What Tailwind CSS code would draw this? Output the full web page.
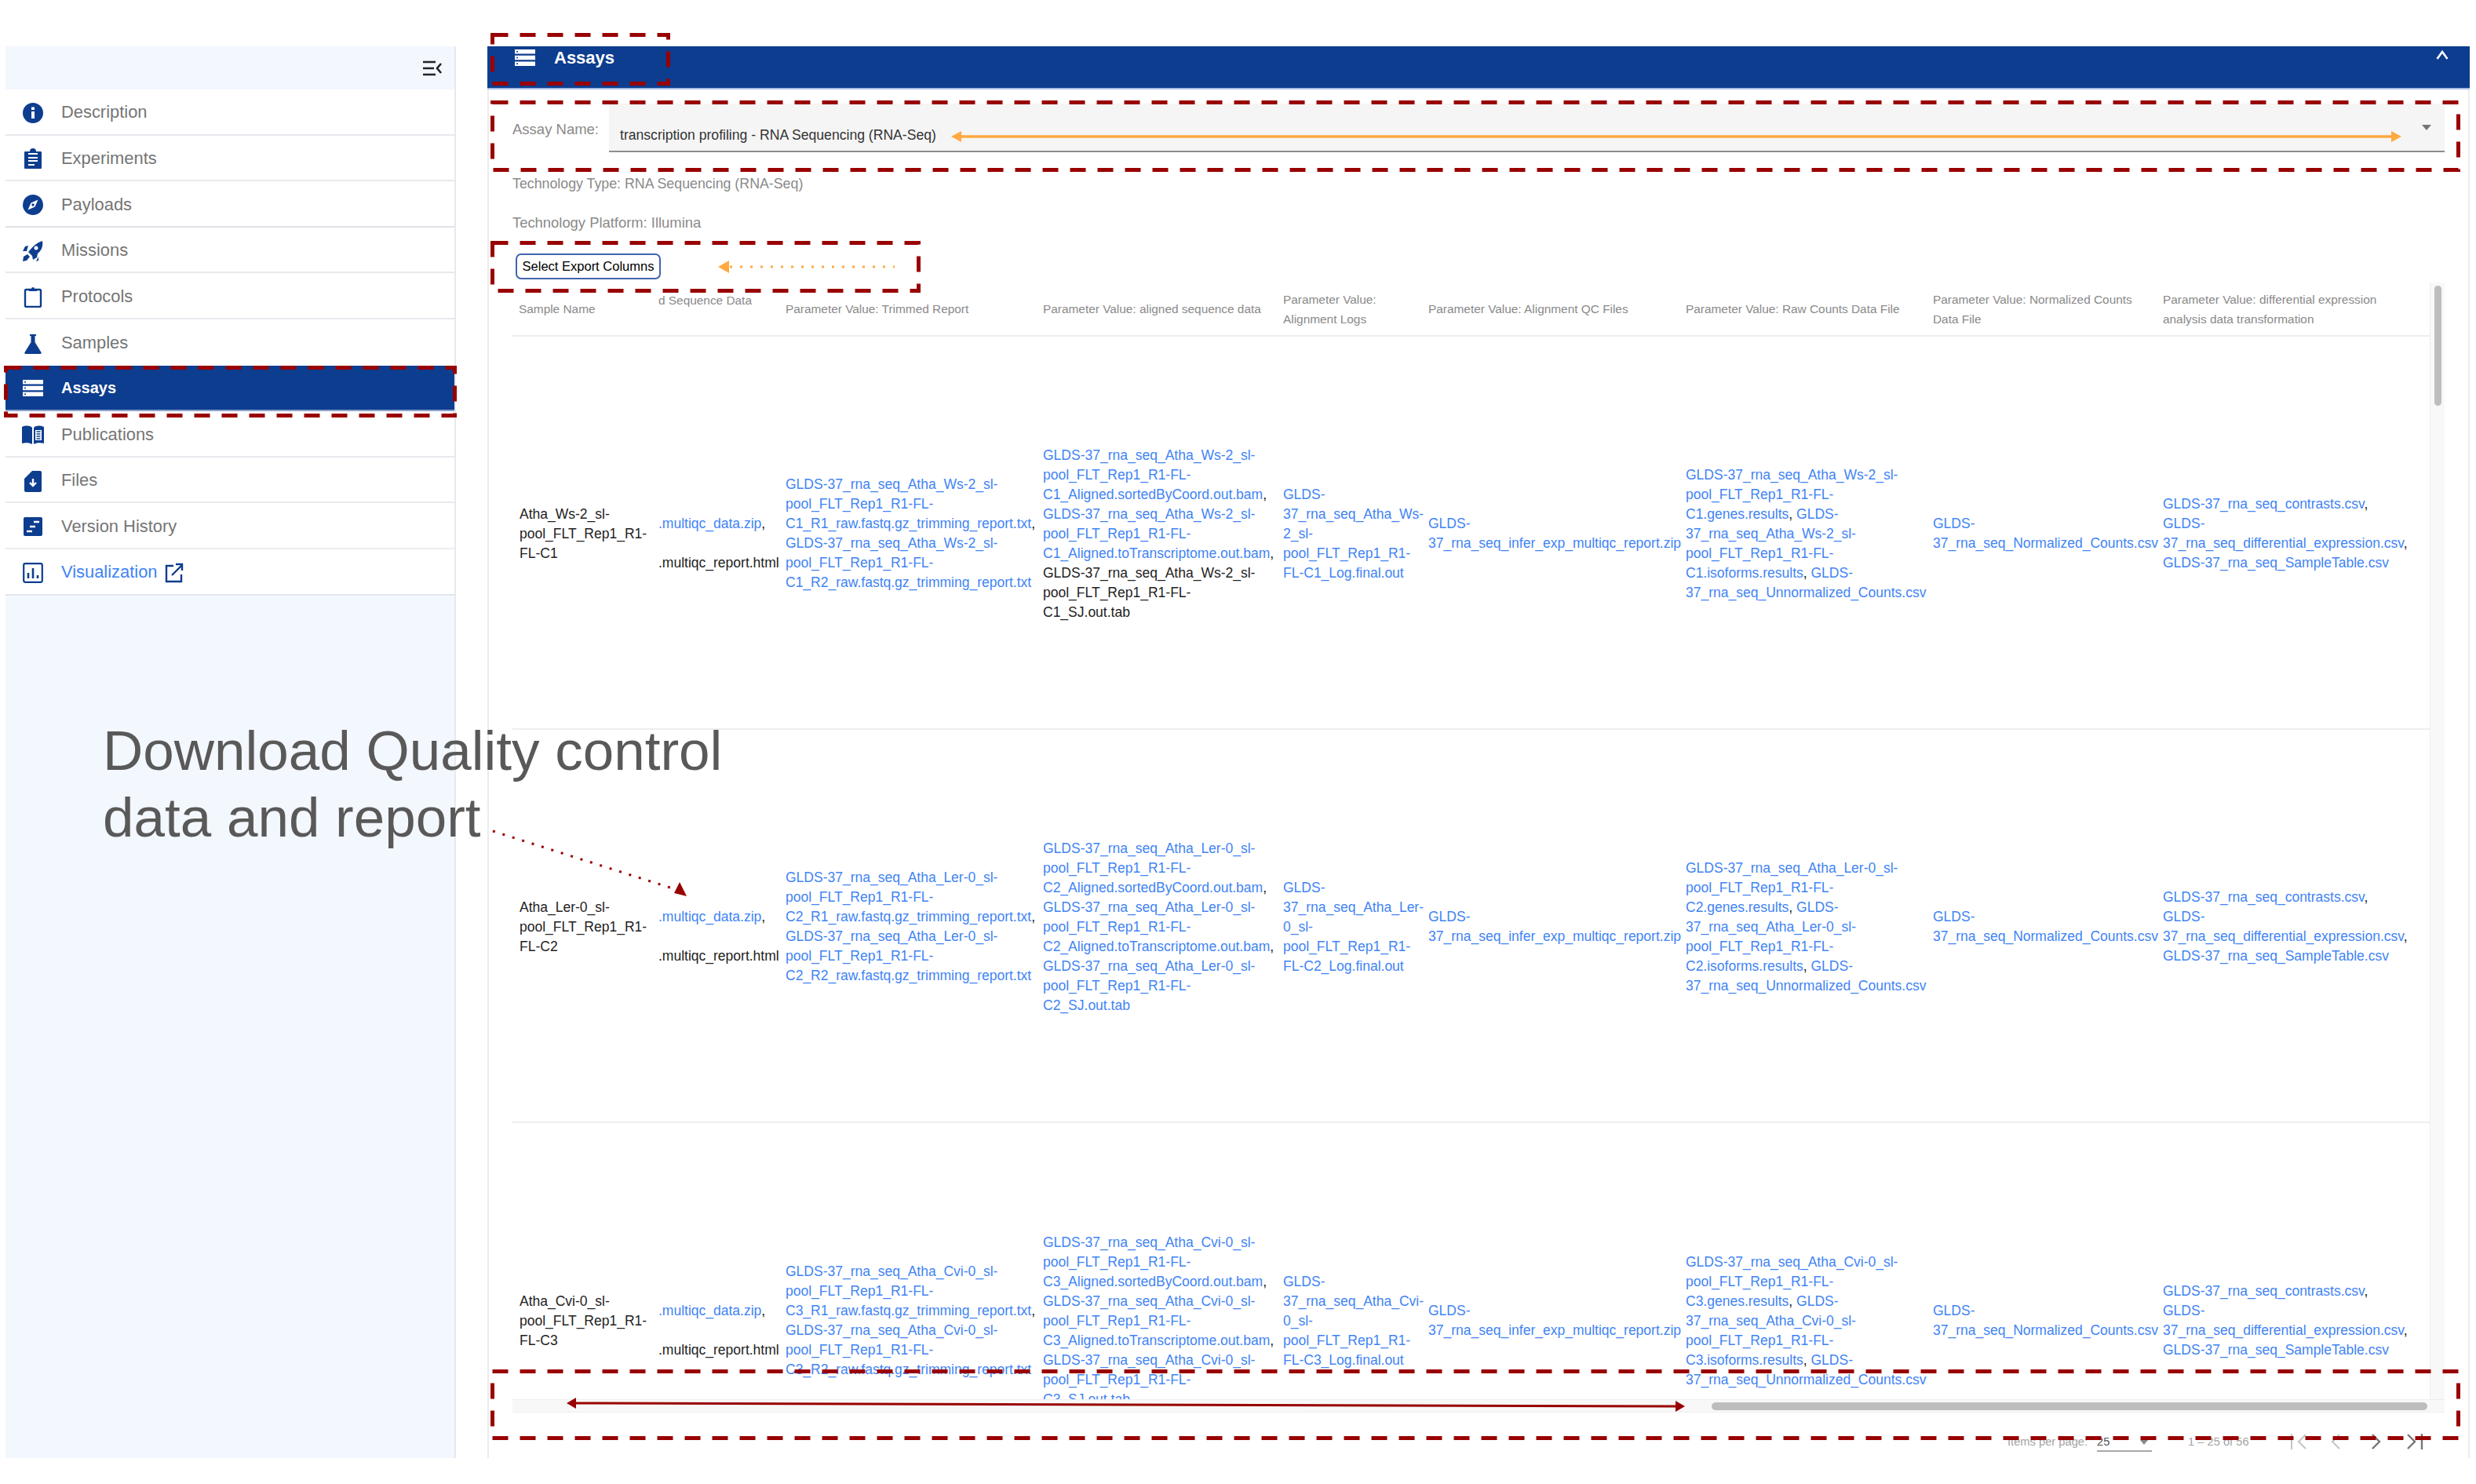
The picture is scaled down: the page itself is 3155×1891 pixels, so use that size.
<!DOCTYPE html>
<html lang="en">

<head>
  <meta charset="UTF-8" />
  <title>Assays</title>
  <script src="https://cdn.jsdelivr.net/npm/@tailwindcss/browser@4"></script>
</head>

<body class="bg-white font-['Liberation_Sans',Arial,sans-serif]">
  <div class="relative w-[3155px] h-[1891px] overflow-hidden pt-[59px] pl-[7px] flex items-start">

    <!-- Sidebar -->
    <aside class="w-[574px] h-[1799px] bg-[#f3f7fe] border-r-2 border-[#e6e9ef] shrink-0 text-[21.9px] text-[#757575]">
      <div class="h-[55px] flex justify-end items-center pr-[16px]">
        <svg class="w-[24px] h-[20px] text-[#222]" viewBox="0 0 24 20" fill="none" stroke="currentColor" stroke-width="2.6">
          <path d="M0 2h16M0 10h14M0 18h16M23 4l-5 6 5 6" />
        </svg>
      </div>
      <div class="h-[58.6px] pt-[3px] bg-white border-b-2 border-[#e8e9ee] flex items-center">
        <svg class="w-[26px] h-[26px] ml-[22px] mr-[23px] text-[#0d3d8f]" viewBox="0 0 26 26">
          <circle cx="13" cy="13" r="13" fill="currentColor" />
          <path d="M11 11h4v9h-4zM11 5.500h4v3.500h-4z" fill="#fff" />
        </svg>
        <span>Description</span>
      </div>
      <div class="h-[58.6px] pt-[3px] bg-white border-b-2 border-[#e8e9ee] flex items-center">
        <svg class="w-[26px] h-[26px] ml-[22px] mr-[23px] text-[#0d3d8f]" viewBox="0 0 26 26">
          <path d="M3 4h6a4 4 0 0 1 8 0h6a1 1 0 0 1 1 1v20a1 1 0 0 1-1 1H3a1 1 0 0 1-1-1V5a1 1 0 0 1 1-1z" fill="currentColor" />
          <path d="M7 7h12M7 12h12M7 16h12M7 21h8" stroke="#fff" stroke-width="2" />
        </svg>
        <span>Experiments</span>
      </div>
      <div class="h-[58.6px] pt-[3px] bg-white border-b-2 border-[#dfe1e7] flex items-center">
        <svg class="w-[26px] h-[26px] ml-[22px] mr-[23px] text-[#0d3d8f]" viewBox="0 0 26 26">
          <circle cx="13" cy="13" r="13" fill="currentColor" />
          <path d="M19.500 6.500 15.500 15.500 6.500 19.500 10.500 10.500z" fill="#fff" />
          <circle cx="13" cy="13" r="1.700" fill="currentColor" />
        </svg>
        <span>Payloads</span>
      </div>
      <div class="h-[58.6px] pt-[3px] bg-white border-b-2 border-[#e8e9ee] flex items-center">
        <svg class="w-[26px] h-[26px] ml-[22px] mr-[23px] text-[#0d3d8f]" viewBox="0 0 26 26">
          <path d="M25 0c1 7-1 12-6 16l-1 5-5 3-1-5-5-5 1-1c5-6 10-11 17-13z" fill="currentColor" />
          <circle cx="17" cy="9" r="2.500" fill="#fff" />
          <path d="M7 6l-4 1-3 6h5zM6 17l-5 3-1 6 5-1 4-5zM20 20l-3 6 3-1z" fill="currentColor" />
        </svg>
        <span>Missions</span>
      </div>
      <div class="h-[58.6px] pt-[3px] bg-white border-b-2 border-[#e8e9ee] flex items-center">
        <svg class="w-[26px] h-[28px] ml-[22px] mr-[23px] text-[#0d3d8f]" viewBox="0 0 26 28" fill="none" stroke="currentColor" stroke-width="2.400">
          <rect x="3" y="5" width="20" height="22" rx="1.500" />
          <path d="M8 4h3a2 2 0 0 1 4 0h3v3H8z" fill="currentColor" stroke="none" />
        </svg>
        <span>Protocols</span>
      </div>
      <div class="h-[58.6px] pt-[3px] bg-white flex items-center">
        <svg class="w-[26px] h-[26px] ml-[22px] mr-[23px] text-[#0d3d8f]" viewBox="0 0 26 26">
          <path d="M9 1h8v2h-1.500v8l8 13a1.300 1.300 0 0 1-1 2H3.500a1.300 1.300 0 0 1-1-2l8-13V3H9z" fill="currentColor" />
        </svg>
        <span>Samples</span>
      </div>
      <div class="h-[58.6px] pt-[1px] bg-[#0d3d8f] border-b-2 border-[#8ba3cc] flex items-center text-white text-[20px] font-bold">
        <svg class="w-[26px] h-[21px] ml-[22px] mr-[23px] text-white" viewBox="0 0 26 21">
          <path d="M0 0h26v5.500H0zM0 7.750h26v5.500H0zM0 15.500h26V21H0z" fill="currentColor" />
          <path d="M2 2h2v1.500H2zM2 9.750h2v1.500H2zM2 17.500h2V19H2z" fill="#0d3d8f" />
        </svg>
        <span>Assays</span>
      </div>
      <div class="h-[58.6px] pt-[3px] bg-white border-b-2 border-[#e8e9ee] flex items-center">
        <svg class="w-[28px] h-[24px] ml-[21px] mr-[22px] text-[#0d3d8f]" viewBox="0 0 28 24">
          <path d="M0 2c5-2 10-2 13 1v21c-4-2-8-2-13-1zM15 3c3-3 8-3 13-1v21c-5-1-9-1-13 1z" fill="currentColor" />
          <path d="M17 6h8v13h-8z" fill="#fff" />
          <path d="M18.500 8h5M18.500 11h5M18.500 14h5M18.500 17h5" stroke="currentColor" stroke-width="1.300" />
        </svg>
        <span>Publications</span>
      </div>
      <div class="h-[58.6px] pt-[3px] bg-white border-b-2 border-[#e8e9ee] flex items-center">
        <svg class="w-[26px] h-[28px] ml-[22px] mr-[23px] text-[#0d3d8f]" viewBox="0 0 26 28">
          <path d="M12 1h10a2 2 0 0 1 2 2v23a2 2 0 0 1-2 2H4a2 2 0 0 1-2-2V11z" fill="currentColor" />
          <path d="M13 11v8M9 16l4 4 4-4" stroke="#fff" stroke-width="2.400" fill="none" />
        </svg>
        <span>Files</span>
      </div>
      <div class="h-[58.6px] pt-[3px] bg-white border-b-2 border-[#eceef2] flex items-center">
        <svg class="w-[26px] h-[26px] ml-[22px] mr-[23px] text-[#0d3d8f]" viewBox="0 0 26 26">
          <rect x="1" y="1" width="24" height="24" rx="2" fill="currentColor" />
          <path d="M14 7h7M9 13h7M5 19h7" stroke="#fff" stroke-width="2.600" />
        </svg>
        <span>Version History</span>
      </div>
      <div class="h-[58.6px] pt-[3px] bg-white border-b-2 border-[#e3e5ea] flex items-center">
        <svg class="w-[26px] h-[26px] ml-[22px] mr-[23px] text-[#0d3d8f]" viewBox="0 0 26 26" fill="none" stroke="currentColor">
          <rect x="1.200" y="1.200" width="23.600" height="23.600" rx="2" stroke-width="2.200" />
          <path d="M7 20v-7M13 20V7M19 20v-4" stroke-width="2.600" />
        </svg>
        <span class="text-[#3f84f5]">Visualization</span>
        <svg class="w-[24px] h-[26px] ml-[9px] text-[#0d3d8f]" viewBox="0 0 24 26" fill="none" stroke="currentColor" stroke-width="2.400">
          <path d="M11 4H2v20h19v-9M9 16 22 3M14 2h8v8" />
        </svg>
      </div>
    </aside>

    <!-- Main panel -->
    <main class="ml-[40px] w-[2526px] h-[1799px] shrink-0 flex flex-col">
      <div class="h-[55px] bg-[#0d3d8f] border-b-2 border-[#a9bde0] flex items-start text-white text-[22px] font-bold shrink-0">
        <svg class="w-[26px] h-[21px] ml-[35px] mt-[4px] text-white" viewBox="0 0 26 21">
          <path d="M0 0h26v5.500H0zM0 7.750h26v5.500H0zM0 15.500h26V21H0z" fill="currentColor" />
          <path d="M2 2h2v1.500H2zM2 9.750h2v1.500H2zM2 17.500h2V19H2z" fill="#0d3d8f" />
        </svg>
        <span class="ml-[24px] mt-[1px] leading-[28px]">Assays</span>
        <svg class="w-[16px] h-[12px] ml-auto mr-[27px] mt-[5px] text-white" viewBox="0 0 16 12" fill="none" stroke="currentColor" stroke-width="2.600">
          <path d="M1.500 11 8 2l6.500 9" />
        </svg>
      </div>

      <div class="flex-1 min-h-0 border-x-2 border-[#ececec] px-[30px]">
        <!-- Assay select -->
        <div class="mt-[18px] flex h-[62px]">
          <div class="w-[123px] pt-[20px] text-[18.5px] leading-[26px] text-[#8a8a8a]">Assay Name:</div>
          <div class="flex-1 bg-[#f5f5f5] border-b-2 border-[#8c8c8c] flex items-start pl-[14px] pr-[17px] text-[17.6px] text-[#333]">
            <span class="mt-[27px] leading-[26px]">transcription profiling - RNA Sequencing (RNA-Seq)</span>
            <span class="ml-auto mt-[27px] w-0 h-0 border-x-[6px] border-t-[7px] border-x-transparent border-t-[#757575]"></span>
          </div>
        </div>

        <div class="mt-[27px] text-[17.8px] leading-[26px] text-[#8a8a8a]">Technology Type: RNA Sequencing (RNA-Seq)</div>
        <div class="mt-[24px] text-[18.4px] leading-[26px] text-[#8a8a8a]">Technology Platform: Illumina</div>

        <button class="block mt-[26px] ml-[4px] w-[185px] h-[33px] border-2 border-[#3f65ad] rounded-[7px] text-[16.5px] text-black">Select Export Columns</button>

        <!-- Table -->
        <div class="mt-[10px] h-[1434px] flex flex-col">
          <div class="flex flex-1 min-h-0">
            <div class="w-[2443px] overflow-hidden text-[17.5px] leading-[25px] text-[#222]">

              <div class="h-[63px] grid grid-cols-[186px_162px_328px_306px_185px_328px_315px_293px_340px] items-center border-b-2 border-[#eeeeee] pb-[6px] text-[15.4px] text-[#8a8a8a]">
                <div class="pl-[8px]">Sample Name</div>
                <div class="self-start mt-[4px]">d Sequence Data</div>
                <div>Parameter Value: Trimmed Report</div>
                <div>Parameter Value: aligned sequence data</div>
                <div>Parameter Value:<br>Alignment Logs</div>
                <div>Parameter Value: Alignment QC Files</div>
                <div>Parameter Value: Raw Counts Data File</div>
                <div>Parameter Value: Normalized Counts<br>Data File</div>
                <div>Parameter Value: differential expression<br>analysis data transformation</div>
              </div>

              <!-- Row 1 -->
              <div class="h-[501px] pt-[3px] grid grid-cols-[186px_162px_328px_306px_185px_328px_315px_293px_340px] items-center border-b-2 border-[#eeeeee] whitespace-nowrap">
                <div class="pl-[9px]">Atha_Ws-2_sl-<br>pool_FLT_Rep1_R1-<br>FL-C1</div>
                <div><br><span class="text-[#3f84f5]">.multiqc_data.zip</span>,<br><br>.multiqc_report.html</div>
                <div><span class="text-[#3f84f5]">GLDS-37_rna_seq_Atha_Ws-2_sl-<br>pool_FLT_Rep1_R1-FL-<br>C1_R1_raw.fastq.gz_trimming_report.txt</span>,<br><span class="text-[#3f84f5]">GLDS-37_rna_seq_Atha_Ws-2_sl-<br>pool_FLT_Rep1_R1-FL-<br>C1_R2_raw.fastq.gz_trimming_report.txt</span></div>
                <div><span class="text-[#3f84f5]">GLDS-37_rna_seq_Atha_Ws-2_sl-<br>pool_FLT_Rep1_R1-FL-<br>C1_Aligned.sortedByCoord.out.bam</span>,<br><span class="text-[#3f84f5]">GLDS-37_rna_seq_Atha_Ws-2_sl-<br>pool_FLT_Rep1_R1-FL-<br>C1_Aligned.toTranscriptome.out.bam</span>,<br>GLDS-37_rna_seq_Atha_Ws-2_sl-<br>pool_FLT_Rep1_R1-FL-<br>C1_SJ.out.tab</div>
                <div class="text-[#3f84f5]">GLDS-<br>37_rna_seq_Atha_Ws-<br>2_sl-<br>pool_FLT_Rep1_R1-<br>FL-C1_Log.final.out</div>
                <div class="text-[#3f84f5]">GLDS-<br>37_rna_seq_infer_exp_multiqc_report.zip</div>
                <div><span class="text-[#3f84f5]">GLDS-37_rna_seq_Atha_Ws-2_sl-<br>pool_FLT_Rep1_R1-FL-<br>C1.genes.results</span>, <span class="text-[#3f84f5]">GLDS-<br>37_rna_seq_Atha_Ws-2_sl-<br>pool_FLT_Rep1_R1-FL-<br>C1.isoforms.results</span>, <span class="text-[#3f84f5]">GLDS-<br>37_rna_seq_Unnormalized_Counts.csv</span></div>
                <div class="text-[#3f84f5]">GLDS-<br>37_rna_seq_Normalized_Counts.csv</div>
                <div><span class="text-[#3f84f5]">GLDS-37_rna_seq_contrasts.csv</span>,<br><span class="text-[#3f84f5]">GLDS-<br>37_rna_seq_differential_expression.csv</span>,<br><span class="text-[#3f84f5]">GLDS-37_rna_seq_SampleTable.csv</span></div>
              </div>

              <!-- Row 2 -->
              <div class="h-[501px] pt-[3px] grid grid-cols-[186px_162px_328px_306px_185px_328px_315px_293px_340px] items-center border-b-2 border-[#eeeeee] whitespace-nowrap">
                <div class="pl-[9px]">Atha_Ler-0_sl-<br>pool_FLT_Rep1_R1-<br>FL-C2</div>
                <div><br><span class="text-[#3f84f5]">.multiqc_data.zip</span>,<br><br>.multiqc_report.html</div>
                <div><span class="text-[#3f84f5]">GLDS-37_rna_seq_Atha_Ler-0_sl-<br>pool_FLT_Rep1_R1-FL-<br>C2_R1_raw.fastq.gz_trimming_report.txt</span>,<br><span class="text-[#3f84f5]">GLDS-37_rna_seq_Atha_Ler-0_sl-<br>pool_FLT_Rep1_R1-FL-<br>C2_R2_raw.fastq.gz_trimming_report.txt</span></div>
                <div><span class="text-[#3f84f5]">GLDS-37_rna_seq_Atha_Ler-0_sl-<br>pool_FLT_Rep1_R1-FL-<br>C2_Aligned.sortedByCoord.out.bam</span>,<br><span class="text-[#3f84f5]">GLDS-37_rna_seq_Atha_Ler-0_sl-<br>pool_FLT_Rep1_R1-FL-<br>C2_Aligned.toTranscriptome.out.bam</span>,<br><span class="text-[#3f84f5]">GLDS-37_rna_seq_Atha_Ler-0_sl-<br>pool_FLT_Rep1_R1-FL-<br>C2_SJ.out.tab</span></div>
                <div class="text-[#3f84f5]">GLDS-<br>37_rna_seq_Atha_Ler-<br>0_sl-<br>pool_FLT_Rep1_R1-<br>FL-C2_Log.final.out</div>
                <div class="text-[#3f84f5]">GLDS-<br>37_rna_seq_infer_exp_multiqc_report.zip</div>
                <div><span class="text-[#3f84f5]">GLDS-37_rna_seq_Atha_Ler-0_sl-<br>pool_FLT_Rep1_R1-FL-<br>C2.genes.results</span>, <span class="text-[#3f84f5]">GLDS-<br>37_rna_seq_Atha_Ler-0_sl-<br>pool_FLT_Rep1_R1-FL-<br>C2.isoforms.results</span>, <span class="text-[#3f84f5]">GLDS-<br>37_rna_seq_Unnormalized_Counts.csv</span></div>
                <div class="text-[#3f84f5]">GLDS-<br>37_rna_seq_Normalized_Counts.csv</div>
                <div><span class="text-[#3f84f5]">GLDS-37_rna_seq_contrasts.csv</span>,<br><span class="text-[#3f84f5]">GLDS-<br>37_rna_seq_differential_expression.csv</span>,<br><span class="text-[#3f84f5]">GLDS-37_rna_seq_SampleTable.csv</span></div>
              </div>

              <!-- Row 3 -->
              <div class="h-[501px] pt-[3px] grid grid-cols-[186px_162px_328px_306px_185px_328px_315px_293px_340px] items-center whitespace-nowrap">
                <div class="pl-[9px]">Atha_Cvi-0_sl-<br>pool_FLT_Rep1_R1-<br>FL-C3</div>
                <div><br><span class="text-[#3f84f5]">.multiqc_data.zip</span>,<br><br>.multiqc_report.html</div>
                <div><span class="text-[#3f84f5]">GLDS-37_rna_seq_Atha_Cvi-0_sl-<br>pool_FLT_Rep1_R1-FL-<br>C3_R1_raw.fastq.gz_trimming_report.txt</span>,<br><span class="text-[#3f84f5]">GLDS-37_rna_seq_Atha_Cvi-0_sl-<br>pool_FLT_Rep1_R1-FL-<br>C3_R2_raw.fastq.gz_trimming_report.txt</span></div>
                <div><span class="text-[#3f84f5]">GLDS-37_rna_seq_Atha_Cvi-0_sl-<br>pool_FLT_Rep1_R1-FL-<br>C3_Aligned.sortedByCoord.out.bam</span>,<br><span class="text-[#3f84f5]">GLDS-37_rna_seq_Atha_Cvi-0_sl-<br>pool_FLT_Rep1_R1-FL-<br>C3_Aligned.toTranscriptome.out.bam</span>,<br><span class="text-[#3f84f5]">GLDS-37_rna_seq_Atha_Cvi-0_sl-<br>pool_FLT_Rep1_R1-FL-<br>C3_SJ.out.tab</span></div>
                <div class="text-[#3f84f5]">GLDS-<br>37_rna_seq_Atha_Cvi-<br>0_sl-<br>pool_FLT_Rep1_R1-<br>FL-C3_Log.final.out</div>
                <div class="text-[#3f84f5]">GLDS-<br>37_rna_seq_infer_exp_multiqc_report.zip</div>
                <div><span class="text-[#3f84f5]">GLDS-37_rna_seq_Atha_Cvi-0_sl-<br>pool_FLT_Rep1_R1-FL-<br>C3.genes.results</span>, <span class="text-[#3f84f5]">GLDS-<br>37_rna_seq_Atha_Cvi-0_sl-<br>pool_FLT_Rep1_R1-FL-<br>C3.isoforms.results</span>, <span class="text-[#3f84f5]">GLDS-<br>37_rna_seq_Unnormalized_Counts.csv</span></div>
                <div class="text-[#3f84f5]">GLDS-<br>37_rna_seq_Normalized_Counts.csv</div>
                <div><span class="text-[#3f84f5]">GLDS-37_rna_seq_contrasts.csv</span>,<br><span class="text-[#3f84f5]">GLDS-<br>37_rna_seq_differential_expression.csv</span>,<br><span class="text-[#3f84f5]">GLDS-37_rna_seq_SampleTable.csv</span></div>
              </div>
            </div>

            <!-- Vertical scrollbar -->
            <div class="w-[19px] -mt-[6px] bg-[#f8f8f8] border-l border-[#eeeeee] pt-[4px] pl-[5px]">
              <div class="w-[9px] h-[153px] bg-[#bdbdbd] rounded-full"></div>
            </div>
          </div>

          <!-- Horizontal scrollbar -->
          <div class="h-[17px] bg-[#f8f8f8] border-y border-[#eeeeee] pt-[3px] pl-[1528px]">
            <div class="w-[912px] h-[10px] bg-[#bdbdbd] rounded-full"></div>
          </div>
        </div>

        <!-- Pagination -->
        <div class="h-[58px] flex items-start text-[14.7px] text-[#a3a3a3]">
          <span class="ml-[1905px] mt-[28px] w-[114px] leading-[18px]">Items per page:</span>
          <div class="w-[70px] h-[50px] border-b-2 border-[#a8a8a8] flex items-start pt-[28px] text-[#555] leading-[18px]">
            <span>25</span>
            <span class="ml-auto mr-[5px] mt-[7px] w-0 h-0 border-x-[5px] border-t-[6px] border-x-transparent border-t-[#8a8a8a]"></span>
          </div>
          <span class="ml-[46px] mt-[28px] w-[130px] leading-[18px]">1 – 25 of 56</span>
          <svg class="w-[26px] h-[22px] mt-[26px] text-[#c4c4c4]" viewBox="0 0 26 22" fill="none" stroke="currentColor" stroke-width="2">
            <path d="M2 1v20M20 2l-9 9 9 9" />
          </svg>
          <svg class="w-[16px] h-[22px] ml-[24px] mt-[26px] text-[#c4c4c4]" viewBox="0 0 16 22" fill="none" stroke="currentColor" stroke-width="2">
            <path d="M13 2l-9 9 9 9" />
          </svg>
          <svg class="w-[16px] h-[22px] ml-[36px] mt-[26px] text-[#757575]" viewBox="0 0 16 22" fill="none" stroke="currentColor" stroke-width="2.400">
            <path d="M3 2l9 9-9 9" />
          </svg>
          <svg class="w-[26px] h-[22px] ml-[26px] mt-[26px] text-[#757575]" viewBox="0 0 26 22" fill="none" stroke="currentColor" stroke-width="2.400">
            <path d="M6 2l9 9-9 9M24 1v20" />
          </svg>
        </div>
      </div>
    </main>

    <!-- Annotation callout -->
    <p class="absolute left-[131px] top-[914px] text-[71px] leading-[85px] text-[#595959] whitespace-nowrap">Download Quality control<br>data and report</p>

    <!-- Annotation marks drawn on top of the page -->
    <svg class="absolute left-0 top-0 w-[3155px] h-[1891px] pointer-events-none" viewBox="0 0 3155 1891" fill="none">
      <g stroke="#990000" stroke-width="5" stroke-dasharray="20 15">
        <rect x="7.500" y="468.500" width="572" height="61" />
        <rect x="627.500" y="44.500" width="224" height="62" />
        <rect x="627.500" y="130.500" width="2505" height="86" />
        <rect x="627.500" y="309.500" width="543" height="61" />
        <rect x="627.500" y="1747.500" width="2505" height="85" />
      </g>
      <path d="M1222 174H3050" stroke="#ffa940" stroke-width="3.500" />
      <path d="M1212 174l13-7v14zM3060 174l-13-7v14z" fill="#ffa940" />
      <path d="M930 340H1140" stroke="#ffa940" stroke-width="3" stroke-dasharray="3 10" />
      <path d="M915 340l14-8v16z" fill="#ffa940" />
      <path d="M730 1788 2138 1792" stroke="#990000" stroke-width="3" />
      <path d="M722 1788l12-7v14zM2147 1792l-12-7v14z" fill="#990000" />
      <path d="M628 1059 860 1133" stroke="#990000" stroke-width="3" stroke-dasharray="3 10" />
      <path d="M875 1142l-16-4 7-14z" fill="#990000" />
    </svg>
  </div>
</body>

</html>
